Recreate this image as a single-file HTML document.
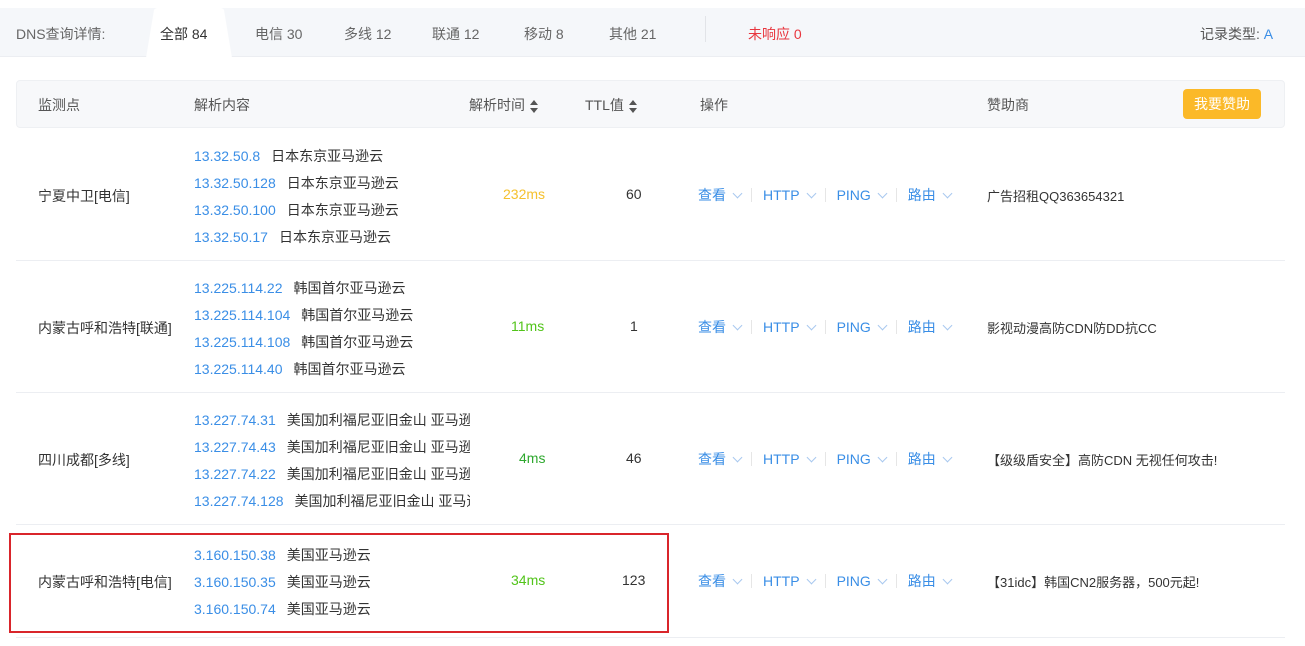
<!DOCTYPE html>
<html><head><meta charset="utf-8"><style>
*{margin:0;padding:0;box-sizing:border-box}
body{width:1305px;height:646px;background:#fff;font-family:"Liberation Sans","Noto Sans CJK SC",sans-serif;font-size:14px;color:#333;position:relative;overflow:hidden}
.abs{position:absolute;white-space:nowrap}
.topbar{position:absolute;left:0;top:8px;width:1305px;height:49px;background:#f5f7fa;border-bottom:1px solid #eceef2}
.tab{position:absolute;top:24px;color:#666;font-size:14px}
.thead{position:absolute;left:16px;top:80px;width:1269px;height:48px;background:#f7f8fa;border:1px solid #eef0f3;border-radius:4px}
.th{position:absolute;top:95px;color:#555;font-size:14px}
.sep{position:absolute;left:16px;width:1269px;height:1px;background:#eceef2}
.blue{color:#3a8ee6}
.ip{position:absolute;left:194px;font-size:14px;white-space:nowrap}
.ip span{color:#333;margin-left:11px}
.act{position:absolute;left:698px;color:#3a8ee6;font-size:14px;white-space:nowrap}
.act i{font-style:normal;display:inline-block;width:7px;height:7px;border-right:1px solid #a8c8ef;border-bottom:1px solid #a8c8ef;transform:rotate(45deg);margin:0 10px 3px 8px}
.act b{font-weight:normal;display:inline-block;width:1px;height:14px;background:#e6e6e6;vertical-align:-2px;margin-right:11px}
.sort{display:inline-block;vertical-align:middle;margin-left:5px;width:9px;height:13px;position:relative}
.sort:before{content:"";position:absolute;left:0;top:0;border:4.5px solid transparent;border-bottom:5px solid #555;border-top:0}
.sort:after{content:"";position:absolute;left:0;bottom:0;border:4.5px solid transparent;border-top:5px solid #555;border-bottom:0}
</style></head><body>
<div class="topbar"></div>
<svg class="abs" style="left:140px;top:8px" width="96" height="50"><path d="M6 50 L14 2 Q15 0 18 0 L80 0 Q83 0 84 2 L92 50 Z" fill="#fff"/></svg>
<div class="tab" style="left:16px">DNS查询详情:</div>
<div class="tab" style="left:160px;color:#333">全部 84</div>
<div class="tab" style="left:255px">电信 30</div>
<div class="tab" style="left:344px">多线 12</div>
<div class="tab" style="left:432px">联通 12</div>
<div class="tab" style="left:524px">移动 8</div>
<div class="tab" style="left:609px">其他 21</div>
<div class="abs" style="left:705px;top:16px;width:1px;height:26px;background:#e2e4e8"></div>
<div class="tab" style="left:748px;color:#e8363e">未响应 0</div>
<div class="tab" style="left:1200px;color:#555">记录类型: <span class="blue">A</span></div>

<div class="thead"></div>
<div class="th" style="left:38px">监测点</div>
<div class="th" style="left:194px">解析内容</div>
<div class="th" style="left:469px">解析时间<span class="sort"></span></div>
<div class="th" style="left:585px">TTL值<span class="sort"></span></div>
<div class="th" style="left:700px">操作</div>
<div class="th" style="left:987px">赞助商</div>
<div class="abs" style="left:1183px;top:89px;width:78px;height:30px;background:#fbb928;border-radius:4px;color:#fff;font-size:14px;text-align:center;line-height:30px">我要赞助</div>

<!-- row1 -->
<div class="abs" style="left:38px;top:186px">宁夏中卫[电信]</div>
<div class="ip blue" style="top:146px">13.32.50.8<span>日本东京亚马逊云</span></div>
<div class="ip blue" style="top:173px">13.32.50.128<span>日本东京亚马逊云</span></div>
<div class="ip blue" style="top:200px">13.32.50.100<span>日本东京亚马逊云</span></div>
<div class="ip blue" style="top:227px">13.32.50.17<span>日本东京亚马逊云</span></div>
<div class="abs" style="left:503px;top:186px;color:#f5c12e">232ms</div>
<div class="abs" style="left:626px;top:186px">60</div>
<div class="act" style="top:185px">查看<i></i><b></b>HTTP<i></i><b></b>PING<i></i><b></b>路由<i></i></div>
<div class="abs" style="left:987px;top:186px;font-size:13px">广告招租QQ363654321</div>
<div class="sep" style="top:260px"></div>

<!-- row2 -->
<div class="abs" style="left:38px;top:318px">内蒙古呼和浩特[联通]</div>
<div class="ip blue" style="top:278px">13.225.114.22<span>韩国首尔亚马逊云</span></div>
<div class="ip blue" style="top:305px">13.225.114.104<span>韩国首尔亚马逊云</span></div>
<div class="ip blue" style="top:332px">13.225.114.108<span>韩国首尔亚马逊云</span></div>
<div class="ip blue" style="top:359px">13.225.114.40<span>韩国首尔亚马逊云</span></div>
<div class="abs" style="left:511px;top:318px;color:#52c41a">11ms</div>
<div class="abs" style="left:630px;top:318px">1</div>
<div class="act" style="top:317px">查看<i></i><b></b>HTTP<i></i><b></b>PING<i></i><b></b>路由<i></i></div>
<div class="abs" style="left:987px;top:318px;font-size:13px">影视动漫高防CDN防DD抗CC</div>
<div class="sep" style="top:392px"></div>

<!-- row3 -->
<div class="abs" style="left:38px;top:450px">四川成都[多线]</div>
<div style="position:absolute;left:0;top:400px;width:470px;height:120px;overflow:hidden">
<div class="ip blue" style="top:10px">13.227.74.31<span>美国加利福尼亚旧金山 亚马逊云</span></div>
<div class="ip blue" style="top:37px">13.227.74.43<span>美国加利福尼亚旧金山 亚马逊云</span></div>
<div class="ip blue" style="top:64px">13.227.74.22<span>美国加利福尼亚旧金山 亚马逊云</span></div>
<div class="ip blue" style="top:91px">13.227.74.128<span>美国加利福尼亚旧金山 亚马逊云</span></div>
</div>
<div class="abs" style="left:519px;top:450px;color:#2ea82e">4ms</div>
<div class="abs" style="left:626px;top:450px">46</div>
<div class="act" style="top:449px">查看<i></i><b></b>HTTP<i></i><b></b>PING<i></i><b></b>路由<i></i></div>
<div class="abs" style="left:987px;top:450px;font-size:13px">【级级盾安全】高防CDN 无视任何攻击!</div>
<div class="sep" style="top:524px"></div>

<!-- row4 -->
<div class="abs" style="left:38px;top:572px">内蒙古呼和浩特[电信]</div>
<div class="ip blue" style="top:545px">3.160.150.38<span>美国亚马逊云</span></div>
<div class="ip blue" style="top:572px">3.160.150.35<span>美国亚马逊云</span></div>
<div class="ip blue" style="top:599px">3.160.150.74<span>美国亚马逊云</span></div>
<div class="abs" style="left:511px;top:572px;color:#52c41a">34ms</div>
<div class="abs" style="left:622px;top:572px">123</div>
<div class="act" style="top:571px">查看<i></i><b></b>HTTP<i></i><b></b>PING<i></i><b></b>路由<i></i></div>
<div class="abs" style="left:987px;top:572px;font-size:13px">【31idc】韩国CN2服务器，500元起!</div>
<div class="sep" style="top:637px"></div>
<div class="abs" style="left:9px;top:533px;width:660px;height:100px;border:2px solid #d9252b"></div>
</body></html>
